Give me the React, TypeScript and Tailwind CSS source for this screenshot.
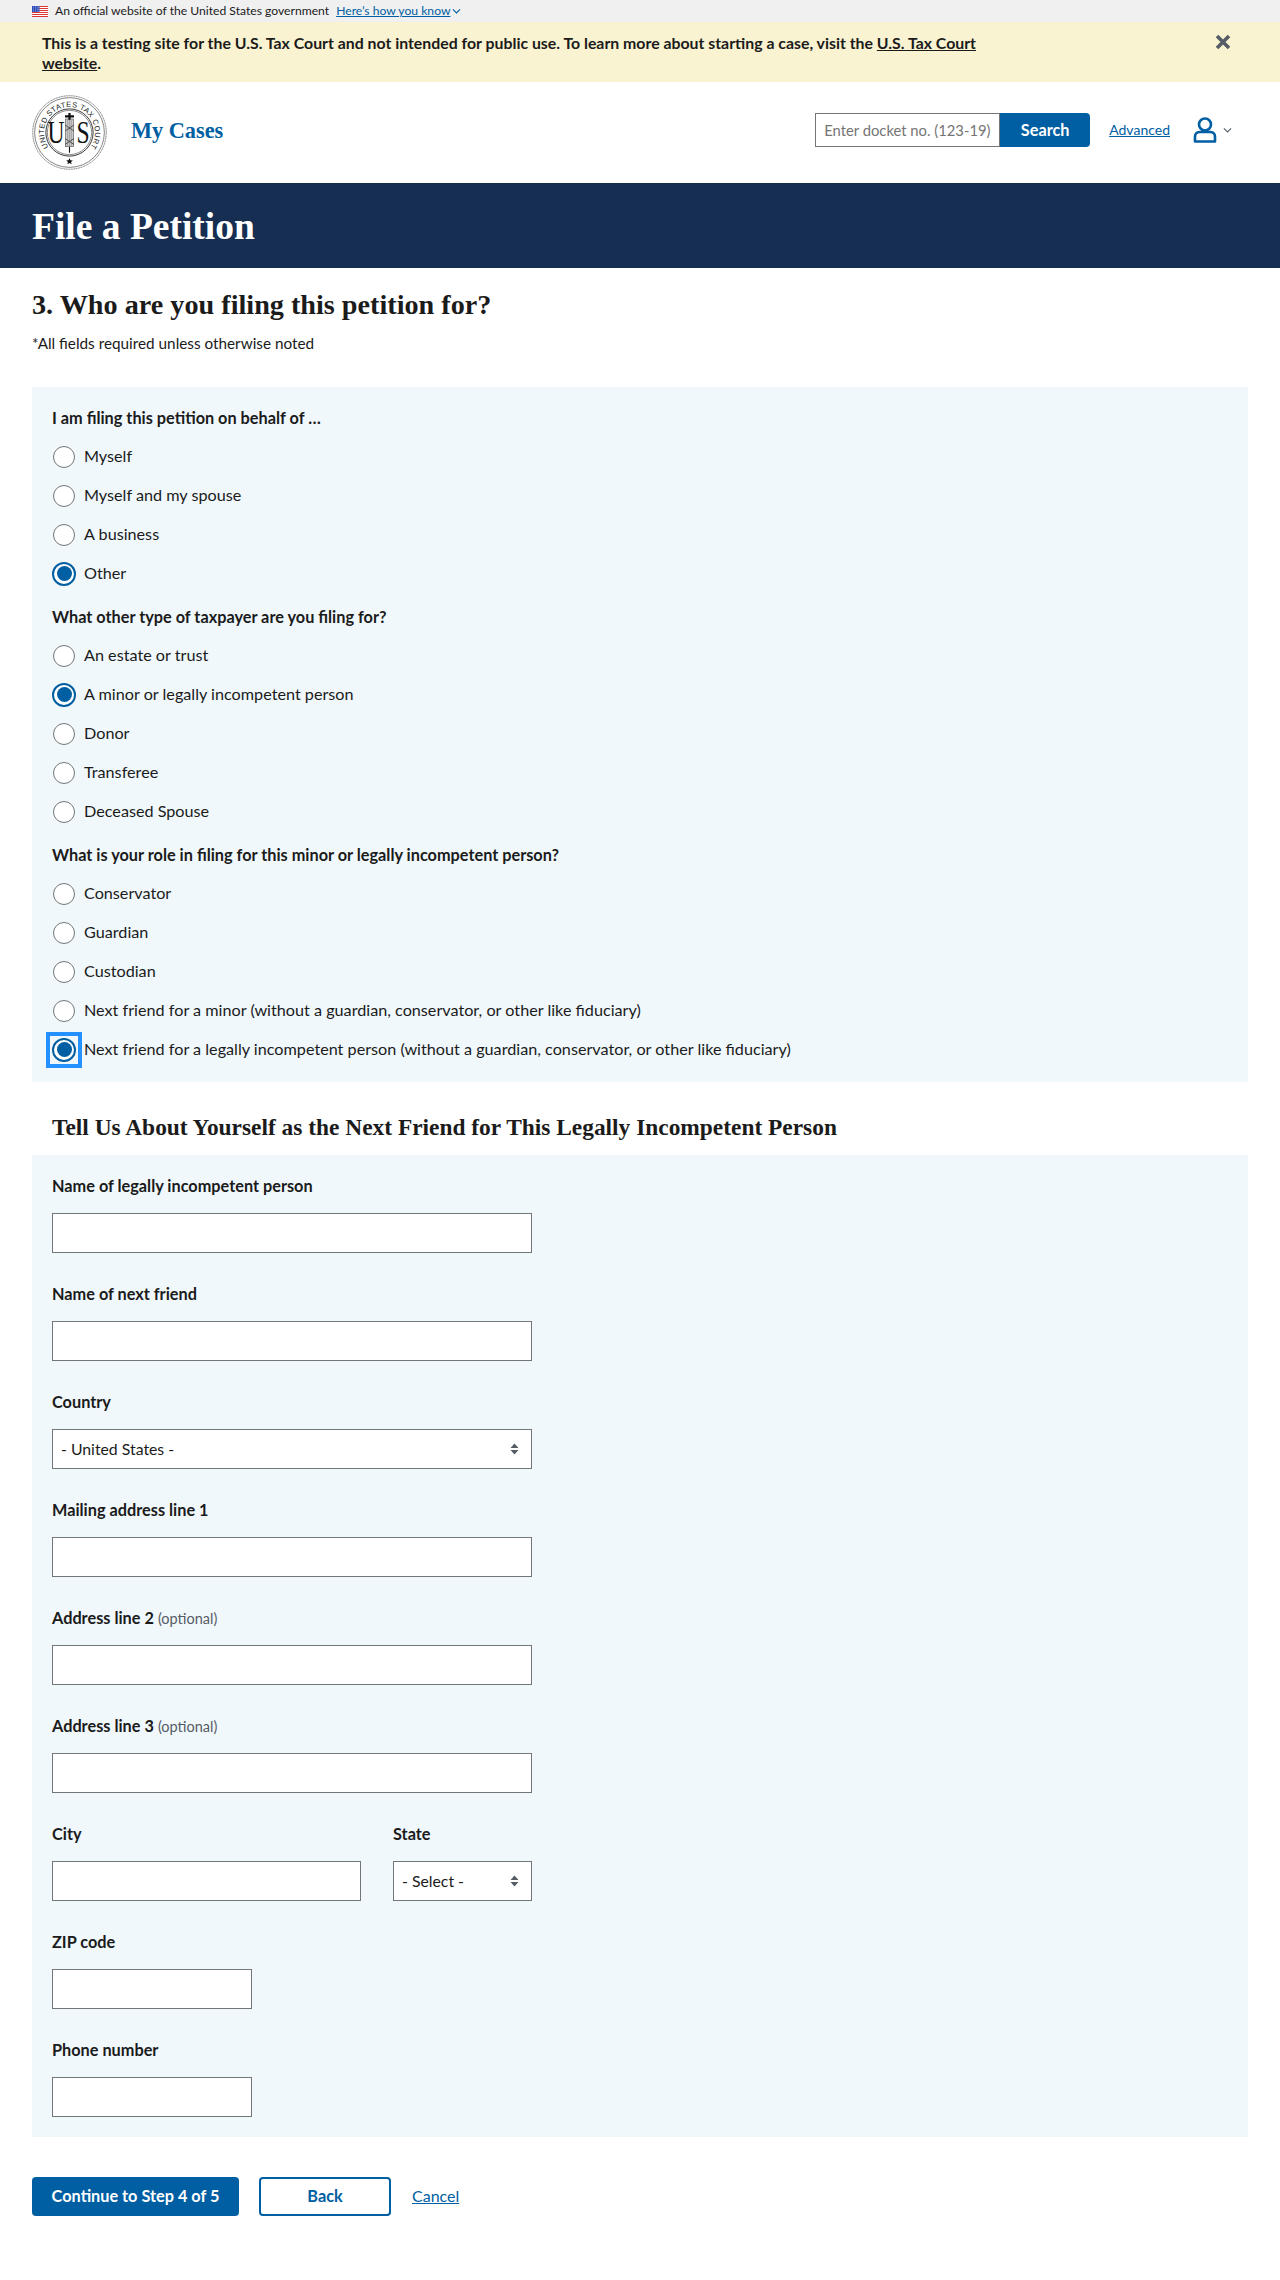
import React from 'react';

const Radio = ({ checked, focus }: { checked?: boolean; focus?: boolean }) => {
  const dot = checked ? (
    <span className="flex h-[24px] w-[24px] items-center justify-center rounded-full border-[2px] border-[#005ea2] bg-white">
      <span className="h-[15px] w-[15px] rounded-full bg-[#005ea2]" />
    </span>
  ) : (
    <span className="h-[22px] w-[22px] rounded-full border border-[#71767a] bg-white" />
  );
  return (
    <span className="flex h-[24px] w-[24px] shrink-0 items-center justify-center">
      {focus ? <span className="flex h-[36px] w-[36px] shrink-0 items-center justify-center border-[4px] border-[#2491ff]">{dot}</span> : dot}
    </span>
  );
};

const Option = ({ label, checked, focus }: { label: string; checked?: boolean; focus?: boolean }) => (
  <div className="flex h-[39px] items-center gap-[8px] text-[16.2px] text-[#1b1b1b]">
    <Radio checked={checked} focus={focus} />
    <span>{label}</span>
  </div>
);

const Group = ({ legend, options, className }: { legend: string; options: { label: string; checked?: boolean; focus?: boolean }[]; className?: string }) => (
  <div className={className}>
    <div className="h-[22px] text-[16.3px] font-bold leading-[22px] text-[#1b1b1b]">{legend}</div>
    <div className="mt-[8px]">
      {options.map((o) => (
        <Option key={o.label} {...o} />
      ))}
    </div>
  </div>
);

const Label = ({ text, optional }: { text: string; optional?: boolean }) => (
  <div className="h-[22px] text-[16.3px] font-bold leading-[22px] text-[#1b1b1b]">
    {text}
    {optional && <span className="ml-[4px] text-[14.5px] font-normal text-[#565c65]">(optional)</span>}
  </div>
);

const TextField = ({ label, optional, width, className }: { label: string; optional?: boolean; width: string; className?: string }) => (
  <div className={className}>
    <Label text={label} optional={optional} />
    <input className={`mt-[16px] block h-[40px] border border-[#71767a] bg-white ${width}`} />
  </div>
);

const SelectArrows = () => (
  <svg width="9" height="12" viewBox="0 0 9 12" className="absolute right-[12px] top-[13px]">
    <path d="M4.5 0.5 L8.5 5 H0.5 Z M4.5 11.5 L0.5 7 H8.5 Z" fill="#565c65" />
  </svg>
);

const SelectField = ({ label, value, width, className }: { label: string; value: string; width: string; className?: string }) => (
  <div className={className}>
    <Label text={label} />
    <div className={`relative mt-[16px] flex h-[40px] items-center border border-[#71767a] bg-white pl-[8px] text-[15.8px] text-[#1b1b1b] ${width}`}>
      {value}
      <SelectArrows />
    </div>
  </div>
);

const Flag = () => (
  <svg width="16" height="11" viewBox="0 0 16 11" className="shrink-0">
    <rect width="16" height="11" fill="#fff" />
    {[0, 2, 4, 6, 8, 10].map((y) => (
      <rect key={y} y={y} width="16" height="1" fill="#d83933" />
    ))}
    <rect width="7.5" height="6" fill="#2b4bb8" />
    {[1, 3, 5].map((y) => [1.2, 3, 4.8, 6.4].map((x) => <rect key={`${x}-${y}`} x={x} y={y - 0.3} width="0.7" height="0.7" fill="#fff" />))}
  </svg>
);

const Seal = () => (
  <svg width="75" height="75" viewBox="0 0 100 100" className="shrink-0">
    <defs>
      <path id="sealArc" d="M 22.15 69.5 A 34 34 0 1 1 77.85 69.5" fill="none" />
    </defs>
    <circle cx="50" cy="50" r="49" fill="#fff" stroke="#666" strokeWidth="1.2" strokeDasharray="1.6 0.7" />
    <circle cx="50" cy="50" r="46.5" fill="none" stroke="#333" strokeWidth="0.8" />
    <circle cx="50" cy="50" r="31.5" fill="none" stroke="#222" strokeWidth="1.2" />
    <circle cx="50" cy="50" r="29.5" fill="none" stroke="#222" strokeWidth="0.7" />
    <text fontFamily="Liberation Sans, sans-serif" fontSize="10" fill="#222">
      <textPath href="#sealArc" startOffset="0" textLength="148">UNITED STATES TAX COURT</textPath>
    </text>
    <text transform="translate(32,64) scale(0.75,1)" textAnchor="middle" fontFamily="Liberation Serif, serif" fontSize="42" fill="#111">U</text>
    <text transform="translate(68,64) scale(0.75,1)" textAnchor="middle" fontFamily="Liberation Serif, serif" fontSize="42" fill="#111">S</text>
    <rect x="44.5" y="32" width="11" height="37" fill="#c9c9c9" stroke="#444" strokeWidth="0.7" />
    <path d="M47.5 33V68M50 33V68M52.5 33V68" stroke="#777" strokeWidth="0.6" />
    <path d="M44 40L56 48M56 40L44 48M44 58L56 66M56 58L44 66" stroke="#333" strokeWidth="1" />
    <path d="M50 24V33M44 28.5H56" stroke="#111" strokeWidth="3" />
    <path d="M50 69V77" stroke="#111" strokeWidth="1.5" />
    <path d="M50 84l1.3 3 3.2.2-2.5 2 .9 3.2-2.9-1.8-2.9 1.8.9-3.2-2.5-2 3.2-.2z" fill="#111" />
  </svg>
);

const Chevron = ({ color, w }: { color: string; w: number }) => (
  <svg width={w} height={w * 0.7} viewBox="0 0 10 7" fill="none">
    <path d="M1 1.5L5 5.5L9 1.5" stroke={color} strokeWidth="1.2" />
  </svg>
);

export default function App() {
  return (
    <div className="min-h-[2280px] bg-white font-['Lato',sans-serif] text-[#1b1b1b]">
      <div className="flex h-[22px] items-center bg-[#f0f0f0] pl-[32px] text-[12.15px]">
        <Flag />
        <span className="ml-[7px]">An official website of the United States government</span>
        <a className="ml-[7px] text-[#005ea2] underline">Here’s how you know</a>
        <span className="ml-[2px]"><Chevron color="#005ea2" w={9} /></span>
      </div>

      <div className="relative h-[60px] bg-[#faf3d1] pl-[42px] pr-[300px] pt-[11px] text-[15.85px] font-bold leading-[20px]">
        This is a testing site for the U.S. Tax Court and not intended for public use. To learn more about starting a case, visit the{' '}
        <a className="underline">U.S. Tax Court website</a>.
        <svg width="16" height="16" viewBox="0 0 16 16" className="absolute left-[1215px] top-[12px]">
          <path d="M2 2L14 14M14 2L2 14" stroke="#565c65" strokeWidth="3.6" />
        </svg>
      </div>

      <header className="flex h-[101px] items-center pl-[32px] pr-[48px]">
        <Seal />
        <span className="mb-[4px] ml-[24px] font-['Liberation_Serif',serif] text-[22.3px] font-bold text-[#005ea2]">My Cases</span>
        <div className="mb-[5px] ml-auto flex items-center">
          <input
            placeholder="Enter docket no. (123-19)"
            className="h-[34px] w-[185px] border border-[#71767a] bg-white pl-[8px] text-[14.8px] placeholder:text-[#757575]"
          />
          <button className="h-[34px] w-[90px] rounded-r-[4px] bg-[#005ea2] text-[16.3px] font-bold text-white">Search</button>
          <a className="mb-[1px] ml-[19px] text-[14px] text-[#005ea2] underline">Advanced</a>
          <svg width="24" height="26" viewBox="0 0 24 26" fill="none" className="ml-[23px]">
            <circle cx="12" cy="7.5" r="6" stroke="#005ea2" strokeWidth="2.6" />
            <path d="M2 24.5V19.5C2 16.5 4.5 15 7 15H17C19.5 15 22 16.5 22 19.5V24.5H2Z" stroke="#005ea2" strokeWidth="2.6" strokeLinejoin="round" />
          </svg>
          <span className="ml-[6px]"><Chevron color="#565c65" w={9} /></span>
        </div>
      </header>

      <div className="flex h-[85px] items-center bg-[#162e51] pl-[32px] pt-[3px] font-['Liberation_Serif',serif] text-[37.5px] font-bold text-white">
        File a Petition
      </div>

      <main className="px-[32px]">
        <h2 className="mt-[19px] h-[35px] font-['Liberation_Serif',serif] text-[28.2px] font-bold leading-[35px]">3. Who are you filing this petition for?</h2>
        <p className="mt-[10px] h-[22px] text-[15.3px] leading-[22px]">*All fields required unless otherwise noted</p>

        <section className="mt-[33px] bg-[#f0f8fc] px-[20px] pb-[13px] pt-[20px]">
          <Group
            legend="I am filing this petition on behalf of …"
            options={[{ label: 'Myself' }, { label: 'Myself and my spouse' }, { label: 'A business' }, { label: 'Other', checked: true }]}
          />
          <Group
            className="mt-[13px]"
            legend="What other type of taxpayer are you filing for?"
            options={[{ label: 'An estate or trust' }, { label: 'A minor or legally incompetent person', checked: true }, { label: 'Donor' }, { label: 'Transferee' }, { label: 'Deceased Spouse' }]}
          />
          <Group
            className="mt-[13px]"
            legend="What is your role in filing for this minor or legally incompetent person?"
            options={[
              { label: 'Conservator' },
              { label: 'Guardian' },
              { label: 'Custodian' },
              { label: 'Next friend for a minor (without a guardian, conservator, or other like fiduciary)' },
              { label: 'Next friend for a legally incompetent person (without a guardian, conservator, or other like fiduciary)', checked: true, focus: true },
            ]}
          />
        </section>

        <h3 className="flex h-[73px] items-center pl-[20px] pt-[18px] font-['Liberation_Serif',serif] text-[23.4px] font-bold">
          Tell Us About Yourself as the Next Friend for This Legally Incompetent Person
        </h3>

        <section className="flex flex-col gap-[30px] bg-[#f0f8fc] px-[20px] pb-[20px] pt-[20px]">
          <TextField label="Name of legally incompetent person" width="w-[480px]" />
          <TextField label="Name of next friend" width="w-[480px]" />
          <SelectField label="Country" value="- United States -" width="w-[480px]" />
          <TextField label="Mailing address line 1" width="w-[480px]" />
          <TextField label="Address line 2" optional width="w-[480px]" />
          <TextField label="Address line 3" optional width="w-[480px]" />
          <div className="flex gap-[32px]">
            <TextField label="City" width="w-[309px]" />
            <SelectField label="State" value="- Select -" width="w-[139px]" />
          </div>
          <TextField label="ZIP code" width="w-[200px]" />
          <TextField label="Phone number" width="w-[200px]" />
        </section>

        <div className="mt-[40px] flex items-center">
          <button className="h-[39px] w-[207px] rounded-[4px] bg-[#005ea2] text-[16.3px] font-bold text-white">Continue to Step 4 of 5</button>
          <button className="ml-[20px] h-[39px] w-[132px] rounded-[4px] border-[2px] border-[#005ea2] bg-white text-[16.3px] font-bold text-[#005ea2]">Back</button>
          <a className="mb-[2px] ml-[21px] text-[16px] text-[#005ea2] underline">Cancel</a>
        </div>
      </main>
    </div>
  );
}
